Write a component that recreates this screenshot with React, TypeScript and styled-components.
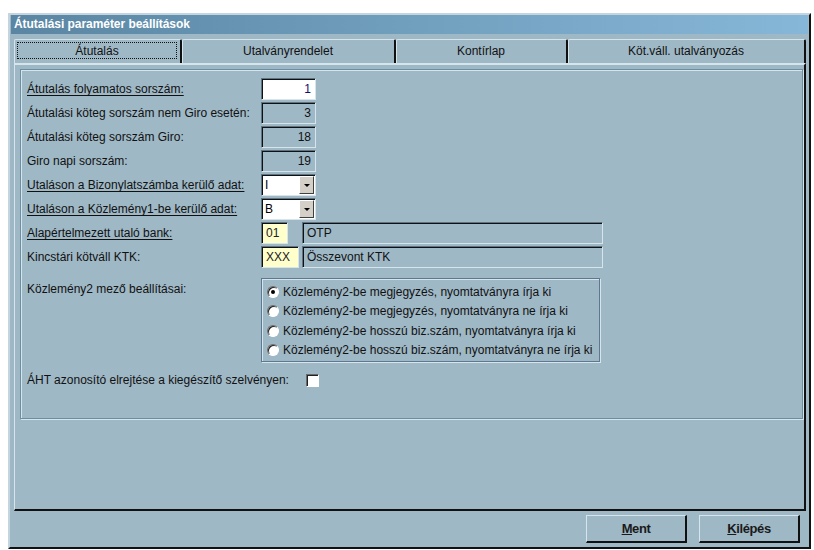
import styled, { createGlobalStyle, css } from "styled-components";

const GlobalStyle = createGlobalStyle`
  html, body {
    margin: 0;
    padding: 0;
    background: #ffffff;
  }
  body {
    font-family: "Liberation Sans", Arial, sans-serif;
    font-size: 12px;
    color: #000;
  }
`;

const PANEL = "#9fb8c6";
const LIGHT = "#d6e4ec";

const sunken = css`
  border-top: 1px solid #5d7485;
  border-left: 1px solid #5d7485;
  border-right: 1px solid ${LIGHT};
  border-bottom: 1px solid ${LIGHT};
  box-shadow: inset 1px 1px 0 #111;
`;

const Window = styled.div`
  margin: 13px 0 0 8px;
  width: 803px;
  height: 536px;
  box-sizing: border-box;
  background: ${PANEL};
  border-top: 2px solid #c4d5df;
  border-left: 2px solid #c4d5df;
  border-right: 2px solid #111;
  border-bottom: 2px solid #111;
  display: flex;
  flex-direction: column;
`;

const TitleBar = styled.div`
  height: 19px;
  margin: 0 1px;
  background: linear-gradient(to right, #5a86a3, #87b7d8);
  color: #fff;
  font-weight: bold;
  font-size: 12px;
  letter-spacing: -0.05px;
  line-height: 19px;
  padding-left: 3px;
`;

const Body = styled.div`
  flex: 1;
  display: flex;
  flex-direction: column;
  padding: 4px 3px 0 4px;
`;

const TabStrip = styled.div`
  display: flex;
  height: 25px;
`;

const Tab = styled.div<{ $w: number }>`
  width: ${(p) => p.$w}px;
  box-sizing: border-box;
  border-top: 1px solid ${LIGHT};
  border-left: 1px solid ${LIGHT};
  border-right: 2px solid #111;
  border-top-left-radius: 2px;
  border-top-right-radius: 2px;
  margin-top: 1px;
  display: flex;
  align-items: center;
  justify-content: center;
  font-size: 12px;
  color: #111;
  padding: 2px 3px 2px 2px;
`;

const FocusLabel = styled.div<{ $focus?: boolean }>`
  flex: 1;
  align-self: stretch;
  display: flex;
  align-items: center;
  justify-content: center;
  border: 1px dotted ${(p) => (p.$focus ? "#111" : "transparent")};
  margin-bottom: 2px;
`;

const TabPanel = styled.div`
  flex: 1;
  display: flex;
  flex-direction: column;
  border-top: 2px solid ${LIGHT};
  border-left: 1px solid ${LIGHT};
  border-right: 2px solid #111;
  border-bottom: 2px solid #111;
  padding: 4px 1px 0 5px;
`;

const GroupBox = styled.div`
  height: 350px;
  box-sizing: border-box;
  border: 1px solid #6d8ea2;
  box-shadow: inset 1px 1px 0 ${LIGHT}, 1px 1px 0 ${LIGHT};
  padding: 8px 0 0 6px;
  display: flex;
  flex-direction: column;
`;

const FormGrid = styled.div`
  display: grid;
  grid-template-columns: 234px 1fr;
  grid-auto-rows: 22px;
  row-gap: 2px;
  align-items: center;
`;

const Label = styled.span<{ $u?: boolean }>`
  color: #111;
  text-decoration: ${(p) => (p.$u ? "underline" : "none")};
  text-underline-offset: 2px;
  white-space: nowrap;
`;

const NumBox = styled.div<{ $editable?: boolean }>`
  width: 55px;
  height: 22px;
  box-sizing: border-box;
  ${sunken};
  background: ${(p) => (p.$editable ? "#fff" : PANEL)};
  color: ${(p) => (p.$editable ? "#10106a" : "#111")};
  text-align: right;
  padding-right: 4px;
  line-height: 20px;
`;

const Combo = styled.div`
  width: 55px;
  height: 22px;
  box-sizing: border-box;
  ${sunken};
  background: #fff;
  display: flex;
  align-items: stretch;
`;

const ComboText = styled.span`
  flex: 1;
  padding-left: 3px;
  line-height: 20px;
`;

const ComboButton = styled.span`
  width: 13px;
  margin: 1px 1px 1px 0;
  background: #d4d0c8;
  border-top: 1px solid #fff;
  border-left: 1px solid #fff;
  border-right: 1px solid #404040;
  border-bottom: 1px solid #404040;
  display: flex;
  align-items: center;
  justify-content: center;
`;

const Arrow = styled.span`
  width: 0;
  height: 0;
  border-left: 3px solid transparent;
  border-right: 3px solid transparent;
  border-top: 3px solid #000;
`;

const CodeRow = styled.div`
  display: flex;
  align-items: center;
  gap: 3px;
  height: 22px;
`;

const CodeBox = styled.div<{ $w: number }>`
  width: ${(p) => p.$w}px;
  height: 22px;
  box-sizing: border-box;
  ${sunken};
  background: #ffffcc;
  padding-left: 4px;
  line-height: 20px;
  color: #222;
`;

const NameBox = styled.div<{ $offset: number }>`
  margin-left: ${(p) => p.$offset}px;
  width: 301px;
  height: 22px;
  box-sizing: border-box;
  ${sunken};
  background: ${PANEL};
  padding-left: 4px;
  line-height: 20px;
  color: #111;
`;

const RadioSection = styled.div`
  display: grid;
  grid-template-columns: 234px 1fr;
  margin-top: 10px;
`;

const RadioLabel = styled.span`
  padding-top: 4px;
  color: #111;
`;

const RadioGroup = styled.div`
  width: 339px;
  height: 84px;
  box-sizing: border-box;
  border: 1px solid #5d7890;
  box-shadow: inset 1px 1px 0 ${LIGHT}, 1px 1px 0 ${LIGHT};
  padding: 3px 0 0 5px;
  display: flex;
  flex-direction: column;
`;

const RadioRow = styled.div`
  height: 19.5px;
  display: flex;
  align-items: center;
  gap: 4px;
  white-space: nowrap;
  color: #111;
`;

const RadioCircle = styled.span<{ $checked?: boolean }>`
  width: 12px;
  height: 12px;
  box-sizing: border-box;
  border-radius: 50%;
  background: #fff;
  border: 1px solid;
  border-color: #6a6a6a #fff #fff #6a6a6a;
  box-shadow: inset 1px 1px 0 #222;
  display: flex;
  align-items: center;
  justify-content: center;
  &::after {
    content: "";
    width: 4px;
    height: 4px;
    border-radius: 50%;
    background: ${(p) => (p.$checked ? "#000" : "transparent")};
  }
`;

const CheckRow = styled.div`
  display: flex;
  align-items: center;
  gap: 17px;
  margin-top: 10px;
  height: 16px;
`;

const CheckBox = styled.span`
  width: 13px;
  height: 13px;
  box-sizing: border-box;
  background: #fff;
  border-top: 1px solid #6a6a6a;
  border-left: 1px solid #6a6a6a;
  border-right: 1px solid #fff;
  border-bottom: 1px solid #fff;
  box-shadow: inset 1px 1px 0 #222;
`;

const Footer = styled.div`
  height: 36px;
  display: flex;
  justify-content: flex-end;
  align-items: center;
  gap: 12px;
  padding-right: 6px;
`;

const Button = styled.button`
  width: 101px;
  height: 28px;
  background: ${PANEL};
  border-top: 1px solid ${LIGHT};
  border-left: 1px solid ${LIGHT};
  border-right: 2px solid #111;
  border-bottom: 2px solid #111;
  font-family: "Liberation Sans", Arial, sans-serif;
  font-size: 13px;
  font-weight: bold;
  letter-spacing: -0.4px;
  color: #1a1a1a;
  padding: 0;
  & u {
    text-underline-offset: 1px;
  }
`;

const tabs = [
  { label: "Átutalás", w: 168, focus: true },
  { label: "Utalványrendelet", w: 214 },
  { label: "Kontírlap", w: 172 },
  { label: "Köt.váll. utalványozás", w: 238 },
];

const radios = [
  "Közlemény2-be megjegyzés, nyomtatványra írja ki",
  "Közlemény2-be megjegyzés, nyomtatványra ne írja ki",
  "Közlemény2-be hosszú biz.szám, nyomtatványra írja ki",
  "Közlemény2-be hosszú biz.szám, nyomtatványra ne írja ki",
];

export default function App() {
  return (
    <>
      <GlobalStyle />
      <Window>
        <TitleBar>Átutalási paraméter beállítások</TitleBar>
        <Body>
          <TabStrip>
            {tabs.map((t) => (
              <Tab key={t.label} $w={t.w}>
                <FocusLabel $focus={t.focus}>{t.label}</FocusLabel>
              </Tab>
            ))}
          </TabStrip>
          <TabPanel>
            <GroupBox>
              <FormGrid>
                <Label $u>Átutalás folyamatos sorszám:</Label>
                <NumBox $editable>1</NumBox>
                <Label>Átutalási köteg sorszám nem Giro esetén:</Label>
                <NumBox>3</NumBox>
                <Label>Átutalási köteg sorszám Giro:</Label>
                <NumBox>18</NumBox>
                <Label>Giro napi sorszám:</Label>
                <NumBox>19</NumBox>
                <Label $u>Utaláson a Bizonylatszámba kerülő adat:</Label>
                <Combo>
                  <ComboText>I</ComboText>
                  <ComboButton>
                    <Arrow />
                  </ComboButton>
                </Combo>
                <Label $u>Utaláson a Közlemény1-be kerülő adat:</Label>
                <Combo>
                  <ComboText>B</ComboText>
                  <ComboButton>
                    <Arrow />
                  </ComboButton>
                </Combo>
                <Label $u>Alapértelmezett utaló bank:</Label>
                <CodeRow>
                  <CodeBox $w={27}>01</CodeBox>
                  <NameBox $offset={11}>OTP</NameBox>
                </CodeRow>
                <Label>Kincstári kötváll KTK:</Label>
                <CodeRow>
                  <CodeBox $w={38}>XXX</CodeBox>
                  <NameBox $offset={0}>Összevont KTK</NameBox>
                </CodeRow>
              </FormGrid>
              <RadioSection>
                <RadioLabel>Közlemény2 mező beállításai:</RadioLabel>
                <RadioGroup>
                  {radios.map((r, i) => (
                    <RadioRow key={r}>
                      <RadioCircle $checked={i === 0} />
                      {r}
                    </RadioRow>
                  ))}
                </RadioGroup>
              </RadioSection>
              <CheckRow>
                <Label>ÁHT azonosító elrejtése a kiegészítő szelvényen:</Label>
                <CheckBox />
              </CheckRow>
            </GroupBox>
          </TabPanel>
          <Footer>
            <Button>
              <u>M</u>ent
            </Button>
            <Button>
              <u>K</u>ilépés
            </Button>
          </Footer>
        </Body>
      </Window>
    </>
  );
}
